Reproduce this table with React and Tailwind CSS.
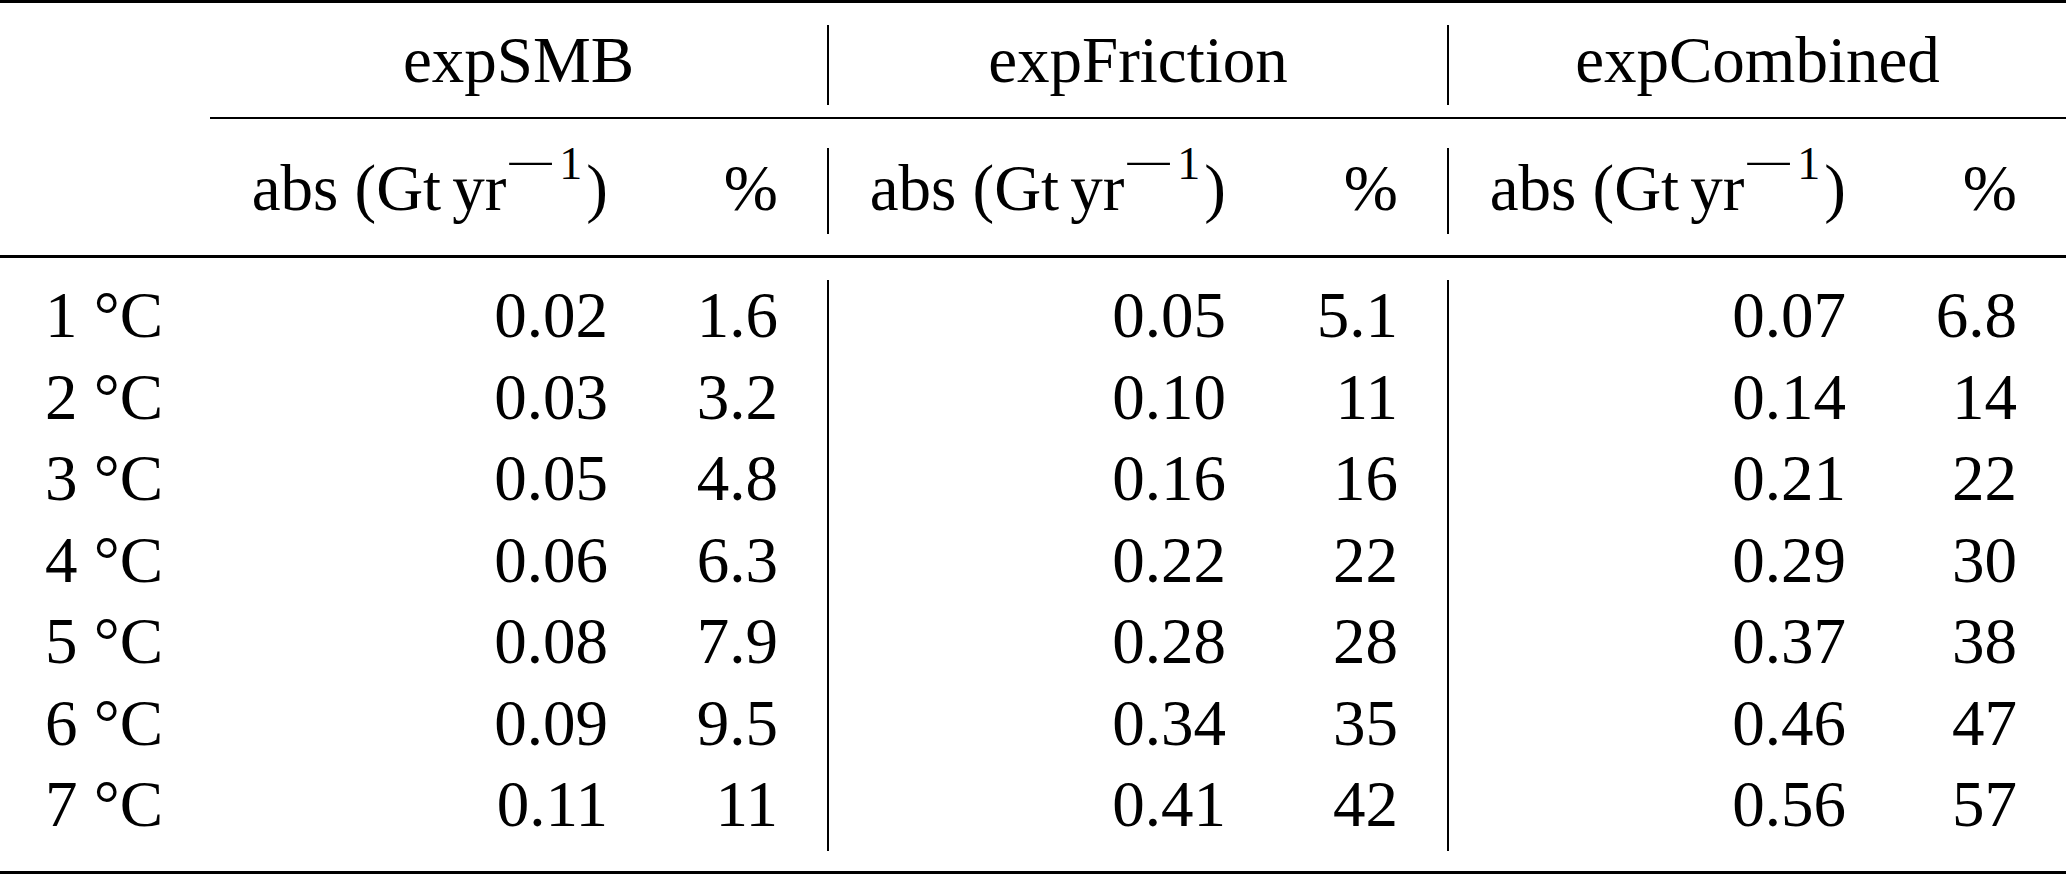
import React from 'react'

const rows = [
  ['1', '0.02', '1.6', '0.05', '5.1', '0.07', '6.8'],
  ['2', '0.03', '3.2', '0.10', '11', '0.14', '14'],
  ['3', '0.05', '4.8', '0.16', '16', '0.21', '22'],
  ['4', '0.06', '6.3', '0.22', '22', '0.29', '30'],
  ['5', '0.08', '7.9', '0.28', '28', '0.37', '38'],
  ['6', '0.09', '9.5', '0.34', '35', '0.46', '47'],
  ['7', '0.11', '11', '0.41', '42', '0.56', '57'],
]

const groups = ['expSMB', 'expFriction', 'expCombined']

// column tracks measured off the reference (sum = 2066)
const cols = 'grid grid-cols-[210px_446px_171px_447px_173px_447px_172px]'

const cellClass = (i) => {
  if (i === 0) return 'pl-[45px] text-left'
  const line = i === 3 || i === 5 ? ' border-l-2 border-black' : ''
  if (i % 2 === 1) return 'pr-[48px] text-right' + line
  return 'pr-[49px] text-right'
}

const AbsHeader = () => (
  <span>
    abs (Gt<span className="inline-block w-[11px]" />yr
    <span className="text-[46px] leading-[0] align-[31px]">
      <span className="inline-block w-[50px] text-center scale-x-[2]">−</span>
      <span className="ml-[3px]">1</span>
    </span>
    <span className="ml-[4px]">)</span>
  </span>
)

const App = () => {
  return (
    <div className="min-h-screen bg-white text-black font-['Liberation_Serif',serif] text-[65px] leading-[70px]">
      <div className="w-[2066px]">
        <div className="h-[3px] bg-black" />

        <div className="grid grid-cols-[210px_617px_620px_619px] h-[81px] mt-[21px] pt-[1px]">
          <div />
          {groups.map((g, i) => (
            <div
              key={g}
              className={'text-center' + (i > 0 ? ' border-l-2 border-black' : '')}
            >
              {g}
            </div>
          ))}
        </div>

        <div className="h-[2px] bg-black ml-[210px] mt-[12px]" />

        <div className={cols + ' h-[86px] mt-[29px]'}>
          <div />
          {groups.map((g, i) => (
            <React.Fragment key={g}>
              <div className={cellClass(i * 2 + 1) + ' pt-[5px]'}>
                <AbsHeader />
              </div>
              <div className={cellClass(i * 2 + 2) + ' pt-[5px]'}>%</div>
            </React.Fragment>
          ))}
        </div>

        <div className="h-[3px] bg-black mt-[21px]" />

        <div className="mt-[22px]">
          {rows.map((r) => (
            <div key={r[0]} className={cols + ' h-[81.5px]'}>
              {r.map((v, i) => (
                <div key={i} className={cellClass(i)}>
                  {i === 0 ? `${v} °C` : v}
                </div>
              ))}
            </div>
          ))}
        </div>

        <div className="h-[3px] bg-black mt-[20px]" />
      </div>
    </div>
  )
}

export default App
